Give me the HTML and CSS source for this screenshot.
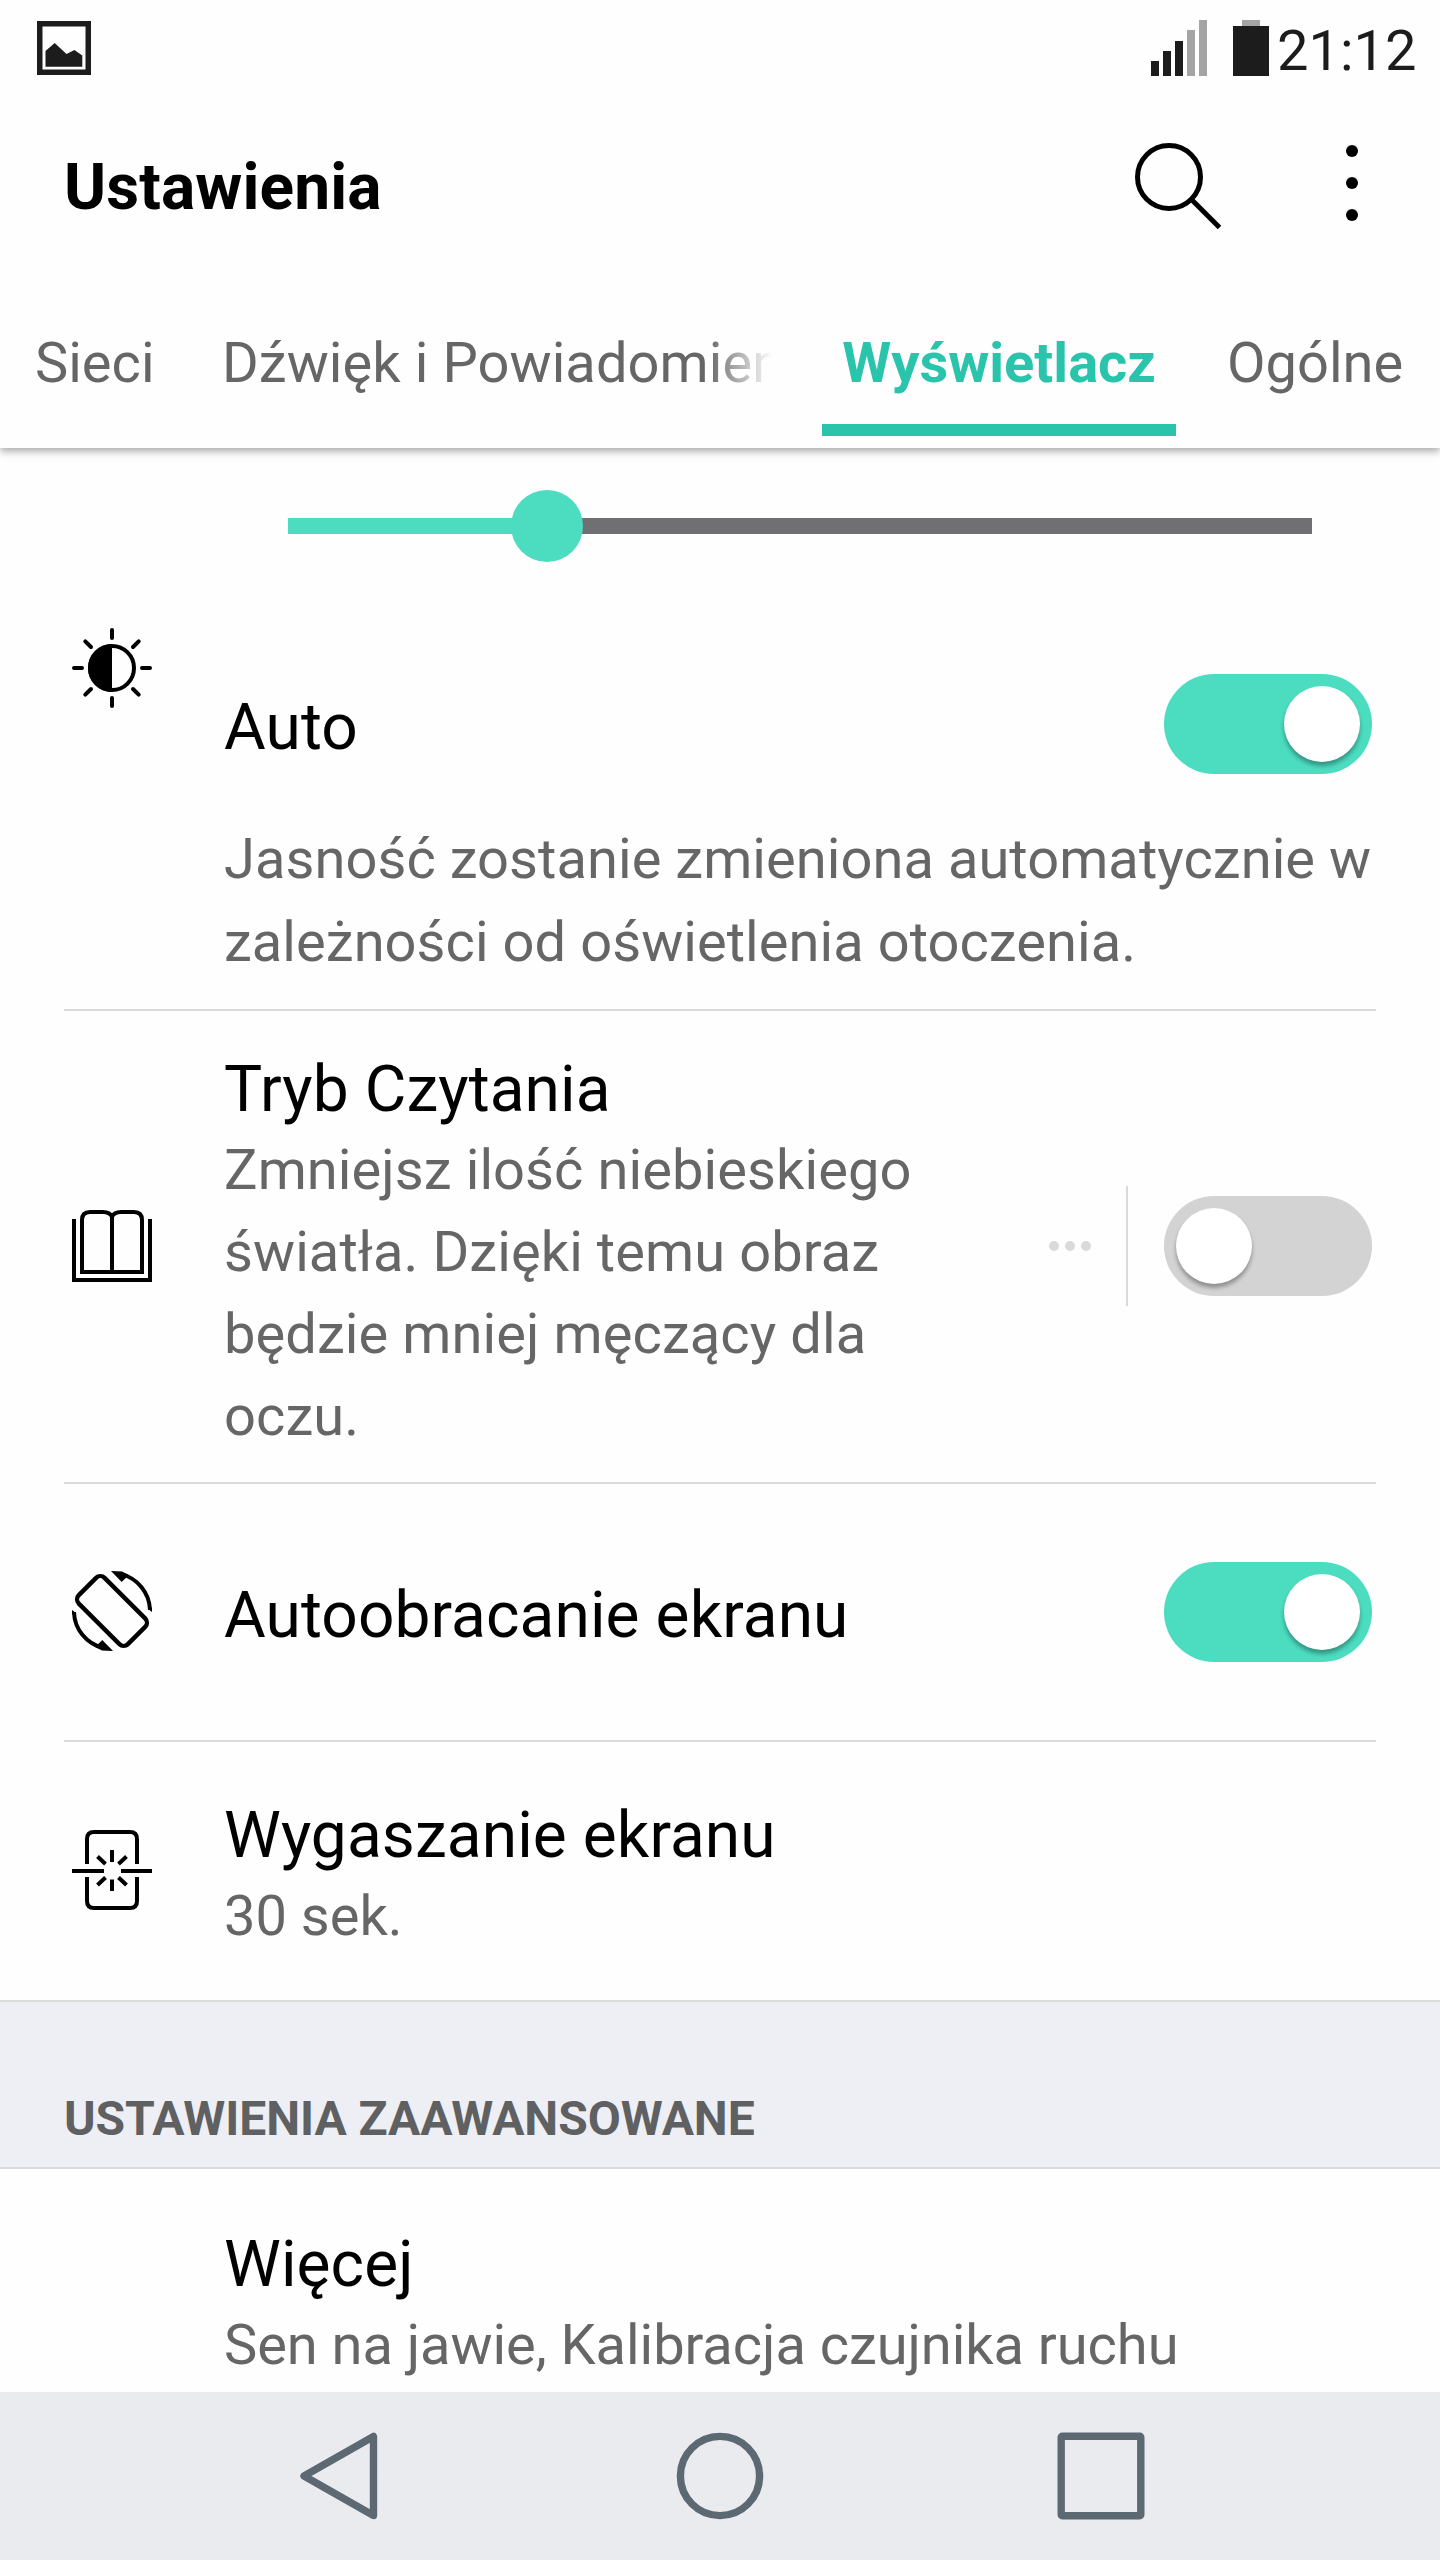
FILE: index.html
```html
<!DOCTYPE html>
<html lang="pl">
<head>
<meta charset="utf-8">
<title>Ustawienia</title>
<link rel="stylesheet" href="styles.css">
</head>
<body>
<div class="screen">
  <header class="header">
    <div class="status">
      <svg class="status-picture" width="54" height="54" viewBox="0 0 54 54">
        <path fill="#1c1c1c" fill-rule="evenodd" d="M0 0H54V54H0ZM5.5 5.5V48.5H48.5V5.5Z"/>
        <path fill="#1c1c1c" d="M8.5 30L17.7 22L29.5 33L37.4 29L45.3 34.5V45.7H8.5Z"/>
      </svg>
      <svg class="status-signal" width="56" height="56" viewBox="0 0 56 56">
        <path fill="#1c1c1c" d="M0 41h8v15h-8zM12 31h8v25h-8zM24 21h8v35h-8z"/>
        <path fill="#a4a4a4" d="M36 10h8v46h-8zM48 0h8v56h-8z"/>
      </svg>
      <svg class="status-battery" width="36" height="56" viewBox="0 0 36 56">
        <path fill="#a4a4a4" d="M9 0h18v6h-18z"/>
        <path fill="#1c1c1c" d="M0 6h36v50h-36z"/>
      </svg>
      <span class="status-time">21:12</span>
    </div>
    <div class="titlebar">
      <h1 class="title">Ustawienia</h1>
      <svg class="search" width="88" height="88" viewBox="0 0 88 88" fill="none" stroke="#000" stroke-width="5">
        <circle cx="35" cy="35" r="31.5"/>
        <path d="M57.5 57.5L85.5 85.5"/>
      </svg>
      <svg class="overflow" width="12" height="76" viewBox="0 0 12 76">
        <circle cx="6" cy="6" r="6"/><circle cx="6" cy="38" r="6"/><circle cx="6" cy="70" r="6"/>
      </svg>
    </div>
    <nav class="tabs">
      <div class="tab">Sieci</div>
      <div class="tab tab-faded"><div class="tab-clip">Dźwięk i Powiadomienia</div></div>
      <div class="tab tab-active">Wyświetlacz</div>
      <div class="tab tab-last">Ogólne</div>
    </nav>
  </header>

  <main class="content">
    <section class="brightness">
      <div class="slider"><div class="slider-fill" style="width: 259px"></div><div class="slider-thumb"></div></div>
      <div class="brightness-row">
        <svg class="icon brightness-icon" viewBox="0 0 80 80" fill="none" stroke="#000" stroke-width="4" stroke-linecap="round">
          <circle cx="40" cy="40" r="22"/>
          <path fill="#000" stroke="none" d="M40 16a24 24 0 0 0 0 48z"/>
          <path d="M40 2V10M40 70V78M2 40H10M70 40H78M13.3 13.3L19 19M61 61L66.7 66.7M66.7 13.3L61 19M19 61L13.3 66.7"/>
        </svg>
        <div class="name auto-name">Auto</div>
        <div class="switch switch-on auto-switch"><div class="knob"></div></div>
        <p class="desc auto-desc">Jasność zostanie zmieniona automatycznie w<br>zależności od oświetlenia otoczenia.</p>
      </div>
    </section>

    <section class="item item-reading">
      <svg class="icon" viewBox="0 0 80 80" fill="none" stroke="#000" stroke-width="4">
        <path d="M2 13V74H78V13"/>
        <path d="M10 66V14Q10 6 18 6H31Q38 6 40 11Q42 6 49 6H62Q70 6 70 14V66Z"/>
        <path d="M40 9V66"/>
      </svg>
      <div class="text">
        <div class="name">Tryb Czytania</div>
        <p class="desc">Zmniejsz ilość niebieskiego światła. Dzięki temu obraz będzie mniej męczący dla oczu.</p>
      </div>
      <div class="more"><i></i><i></i><i></i></div>
      <div class="switch switch-off"><div class="knob"></div></div>
    </section>

    <section class="item item-rotate">
      <svg class="icon" viewBox="0 0 80 80" fill="none" stroke="#000" stroke-width="4.4">
        <rect x="5.3" y="21.8" width="69.4" height="36.4" rx="6" transform="rotate(45 40 40)"/>
        <g id="arrow">
          <path stroke-width="4" d="M49 3.1A38 38 0 0 1 78 39"/>
          <path fill="#000" stroke="none" d="M39 0L50 .6L58 4.5L53.5 7.3L49.7 11ZM76 36.500L80 36.500V41L76 38Z"/>
        </g>
        <use href="#arrow" transform="rotate(180 40 40)"/>
      </svg>
      <div class="text"><div class="name">Autoobracanie ekranu</div></div>
      <div class="switch switch-on"><div class="knob"></div></div>
    </section>

    <section class="item item-timeout">
      <svg class="icon" viewBox="0 0 80 80" fill="none" stroke="#000" stroke-width="4">
        <path d="M15 34V9Q15 2 22 2H58Q65 2 65 9V34M15 47V71Q15 78 22 78H58Q65 78 65 71V47"/>
        <path d="M0 41H32M49 41H80M40 20V32M40 49.500V61M25.500 26.500L33.500 34M54.500 26.500L46.500 34M25.500 55L33.500 47.500M54.500 55L46.500 47.500"/>
      </svg>
      <div class="text">
        <div class="name">Wygaszanie ekranu</div>
        <p class="desc">30 sek.</p>
      </div>
    </section>

    <h2 class="section-title">USTAWIENIA ZAAWANSOWANE</h2>

    <section class="item item-more">
      <div class="text">
        <div class="name">Więcej</div>
        <p class="desc">Sen na jawie, Kalibracja czujnika ruchu</p>
      </div>
    </section>
  </main>

  <footer class="navbar">
    <svg width="88" height="88" viewBox="0 0 88 88"><path d="M78.500 4.500V83.500L9 44Z"/></svg>
    <svg width="88" height="88" viewBox="0 0 88 88"><circle cx="44" cy="44" r="39.600"/></svg>
    <svg width="88" height="88" viewBox="0 0 88 88"><rect x="4.200" y="4.200" width="79.600" height="79.600" rx="1"/></svg>
  </footer>
</div>
</body>
</html>
```

FILE: styles.css
```css
* { box-sizing: border-box; margin: 0; padding: 0; }

body {
  background: #fefefe;
  color: #000;
  font-family: Roboto, "Noto Sans", sans-serif;
}

svg { display: block; flex: none; }

.screen {
  display: flex;
  flex-direction: column;
  width: 1440px;
  height: 2560px;
  overflow: hidden;
}

/* Header */
.header {
  position: relative;
  z-index: 1;
  flex: none;
  height: 448px;
  background: #fefefe;
  box-shadow: 0 3px 8px rgba(0, 0, 0, .36);
}

.status {
  display: flex;
  align-items: flex-start;
  height: 100px;
  padding: 18px 23.5px 0 37px;
}
.status-picture { margin-top: 3px; }
.status-signal { margin: 2px 26px 0 auto; }
.status-battery { margin: 2px 8.5px 0 0; }
.status-time { color: #1c1c1c; font-size: 56px; line-height: 66px; }

.titlebar {
  display: flex;
  align-items: flex-start;
  height: 224px;
  padding: 42px 82px 0 64px;
}
.title { flex: 1; margin-top: 8px; font-size: 64px; font-weight: 700; line-height: 75px; letter-spacing: .1px; }
.search { margin-right: 124px; }
.overflow { margin-top: 3px; }

.tabs {
  display: grid;
  grid-template-columns: 187px 635px 354px 264px;
  height: 112px;
  color: #666;
  font-size: 56px;
  line-height: 66px;
  white-space: nowrap;
}
.tab { padding: 6px 0 0 35px; }
.tab-faded { padding-right: 50px; letter-spacing: .08px; }
.tab-clip {
  overflow: hidden;
  -webkit-mask-image: linear-gradient(to right, #000 calc(100% - 64px), transparent);
  mask-image: linear-gradient(to right, #000 calc(100% - 64px), transparent);
}
.tab-active {
  padding-left: 0;
  border-bottom: 12px solid #29c4ab;
  color: #29c4ab;
  font-weight: 700;
  text-align: center;
}
.tab-last { padding-left: 51px; }

/* Content */
.content { flex: 1; min-height: 0; overflow: hidden; }
.name { font-size: 64px; line-height: 75px; letter-spacing: .1px; white-space: nowrap; }
.desc { color: #666; font-size: 56px; line-height: 82px; }
.name + .desc { margin-top: 2px; }
.icon { width: 80px; height: 80px; }

.brightness {
  height: 563px;
  margin: 0 64px;
  padding-top: 42px;
  border-bottom: 2px solid #dadada;
}
.slider {
  display: flex;
  align-items: center;
  width: 1024px;
  height: 72px;
  margin-left: 224px;
  background: linear-gradient(#707072, #707072) center / 100% 16px no-repeat;
}
.slider-fill { height: 16px; background: #4cdcc0; }
.slider-thumb {
  width: 72px;
  height: 72px;
  margin-left: -36px;
  border-radius: 50%;
  background: #4cdcc0;
}
.brightness-row {
  display: grid;
  grid-template-columns: 160px 1fr 208px;
  grid-template-rows: 190px auto;
  align-items: start;
  margin: 66px 4px 0 0;
}
.brightness-icon { margin-left: 8px; }
.auto-name { padding-top: 62px; }
.auto-switch { margin-top: 46px; }
.brightness-row .auto-desc { grid-column: 2 / 4; margin-top: 0; line-height: 83px; letter-spacing: .06px; white-space: nowrap; }

.item {
  display: flex;
  align-items: center;
  margin: 0 64px;
  padding: 0 4px 0 8px;
  border-bottom: 2px solid #dadada;
}
.item .text { flex: 1; align-self: flex-start; margin-left: 72px; }
.item-reading { height: 473px; }
.item-reading .icon, .item-reading .more, .item-reading .switch { margin-bottom: 1px; }
.item-reading .text { flex: none; width: 720px; padding-top: 41px; }
.item-reading .desc { letter-spacing: .09px; }
.item-rotate { height: 258px; }
.item-rotate .text { padding-top: 94px; }
.item-timeout { height: 258px; border-bottom: 0; }
.item-timeout .text { padding-top: 56px; }
.item-rotate .icon, .item-timeout .icon { margin-bottom: 2px; }
.item-more { border-bottom: 0; }
.item-more .text { margin-left: 152px; padding-top: 58px; }
.item-more .desc { letter-spacing: -.05px; }

.more {
  display: flex;
  align-items: center;
  justify-content: flex-end;
  gap: 6px;
  flex: 1;
  height: 120px;
  margin-right: 36px;
  padding-right: 35px;
  border-right: 2px solid #dadada;
}
.more i { width: 10px; height: 10px; border-radius: 50%; background: #dadada; }

.switch {
  display: flex;
  flex: none;
  width: 208px;
  height: 100px;
  padding: 12px;
  border-radius: 50px;
}
.switch-on { justify-content: flex-end; background: #4cdcc0; }
.switch-off { background: #d3d3d3; }
.knob {
  width: 76px;
  height: 76px;
  border-radius: 50%;
  background: #fff;
  box-shadow: 0 4px 4px rgba(0, 0, 0, .32);
}

.section-title {
  height: 169px;
  padding: 89px 64px 0;
  border: solid #dadada;
  border-width: 2px 0;
  background: #eeeff4;
  color: #5f6062;
  font-size: 48px;
  font-weight: 700;
  line-height: 56px;
  letter-spacing: -.05px;
}

/* Navigation bar */
.navbar {
  display: flex;
  align-items: center;
  justify-content: center;
  gap: 293px;
  flex: none;
  height: 168px;
  background: #e9ebef;
}
.navbar svg { fill: none; stroke: #5c6972; stroke-width: 7.4; stroke-linejoin: round; }
```
